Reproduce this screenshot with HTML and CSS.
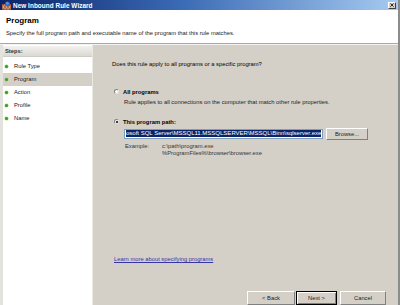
FILE: index.html
```html
<!DOCTYPE html>
<html>
<head>
<meta charset="utf-8">
<link rel="stylesheet" href="styles.css">
</head>
<body>
<div class="window">
  <div class="titlebar">
    <svg class="appicon" width="9" height="9" viewBox="0 0 9 9">
      <rect x="0" y="3" width="9" height="6" fill="#a0462a"/>
      <path d="M0 5h9M0 7h9M3 3v2M6 3v2M1.5 5v2M4.5 5v2M7.5 5v2M3 7v2M6 7v2" stroke="#e9c7a8" stroke-width="0.6"/>
      <circle cx="5.5" cy="2.8" r="2.3" fill="#3a7bd5" stroke="#1c3f8a" stroke-width="0.5"/>
      <path d="M4.2 2.2c.8-.6 1.8-.2 2.2.6" stroke="#7fd36a" stroke-width="0.8" fill="none"/>
    </svg>
    <span class="title">New Inbound Rule Wizard</span>
    <span class="closebtn">
      <svg width="5" height="5" viewBox="0 0 5 5"><path d="M0.5 0.5L4.5 4.5M4.5 0.5L0.5 4.5" stroke="#000" stroke-width="1"/></svg>
    </span>
  </div>
  <div class="header">
    <div class="htitle">Program</div>
    <div class="hsub">Specify the full program path and executable name of the program that this rule matches.</div>
  </div>
  <div class="main">
    <div class="sidebar">
      <div class="steps-head">Steps:</div>
      <ul class="steps">
        <li><span class="dot"></span>Rule Type</li>
        <li class="sel"><span class="dot"></span>Program</li>
        <li><span class="dot"></span>Action</li>
        <li><span class="dot"></span>Profile</li>
        <li><span class="dot"></span>Name</li>
      </ul>
    </div>
    <div class="content">
      <div class="question">Does this rule apply to all programs or a specific program?</div>
      <div class="opt opt1">
        <span class="radio"></span>
        <span class="olabel">All programs</span>
      </div>
      <div class="odesc">Rule applies to all connections on the computer that match other rule properties.</div>
      <div class="opt opt2">
        <span class="radio on"></span>
        <span class="olabel">This program path:</span>
      </div>
      <div class="pathrow">
        <div class="input"><span class="selected">osoft SQL Server\MSSQL11.MSSQLSERVER\MSSQL\Binn\sqlserver.exe</span></div>
        <div class="btn browse">Browse...</div>
      </div>
      <div class="example">
        <div class="exlabel">Example:</div>
        <div class="exvals">
          <div>c:\path\program.exe</div>
          <div>%ProgramFiles%\browser\browser.exe</div>
        </div>
      </div>
      <div class="spacer"></div>
      <a class="link" href="#">Learn more about specifying programs</a>
      <div class="buttons">
        <div class="btn wbtn">&lt; Back</div>
        <div class="btn wbtn default">Next &gt;</div>
        <div class="btn wbtn cancel">Cancel</div>
      </div>
    </div>
  </div>
</div>
</body>
</html>
```

FILE: styles.css
```css
html, body {
  margin: 0;
  padding: 0;
}
body {
  width: 400px;
  height: 305px;
  overflow: hidden;
  font-family: "Liberation Sans", Arial, sans-serif;
  font-size: 5.8px;
  color: #000;
  background: #d4d0c8;
}
.window {
  width: 400px;
  height: 320px;
  display: flex;
  flex-direction: column;
  box-sizing: border-box;
  border-right: 2px solid #8c8c8c;
}
.titlebar {
  height: 10px;
  flex: none;
  display: flex;
  align-items: center;
  background: linear-gradient(to right, #0a246a 0%, #3a6ab4 45%, #a6caf0 100%);
  padding-left: 2px;
  padding-right: 2px;
}
.appicon {
  flex: none;
  margin-right: 2px;
}
.title {
  color: #fff;
  font-weight: bold;
  font-size: 6.4px;
  font-family: "Liberation Sans", Arial, sans-serif;
  flex: 1;
  letter-spacing: 0.05px;
}
.closebtn {
  width: 8px;
  height: 7px;
  background: #d4d0c8;
  box-sizing: border-box;
  border-top: 1px solid #fff;
  border-left: 1px solid #fff;
  border-right: 1px solid #404040;
  border-bottom: 1px solid #404040;
  display: flex;
  align-items: center;
  justify-content: center;
}
.closebtn svg {
  width: 4px;
  height: 4px;
}
.header {
  height: 34px;
  flex: none;
  background: #fff;
  box-sizing: border-box;
  padding: 6px 0 0 6px;
  border-bottom: 1px solid #a8a8a8;
}
.htitle {
  font-weight: bold;
  font-size: 8px;
  line-height: 9px;
}
.hsub {
  margin-top: 5px;
  line-height: 7px;
  color: #222;
}
.main {
  flex: 1;
  display: flex;
  border-top: 1px solid #f4f4f4;
}
.sidebar {
  width: 89px;
  flex: none;
  background: #fff;
  border-left: 3px solid #e4e2dc;
  border-right: 1px solid #ebe9e4;
  padding-top: 1px;
}
.steps-head {
  height: 10px;
  line-height: 10px;
  padding-left: 2px;
  font-weight: bold;
  color: #333;
  background: linear-gradient(to bottom, #f2f1ee, #dcd9d2);
  border-bottom: 1px solid #cfccc4;
}
.steps {
  list-style: none;
  margin: 3px 0 0 0;
  padding: 0;
}
.steps li {
  height: 13px;
  line-height: 13px;
  display: flex;
  align-items: center;
  color: #222;
}
.steps li.sel {
  background: #d4d0c8;
}
.dot {
  width: 3px;
  height: 3px;
  border-radius: 50%;
  background: #3f9b2a;
  box-shadow: 0 0 0 0.5px #8ccf6e;
  margin-left: 2px;
  margin-right: 6px;
}
.content {
  flex: 1;
  background: #d4d0c8;
  display: flex;
  flex-direction: column;
  padding: 16px 12px 0 19px;
}
.question {
  line-height: 7px;
}
.opt {
  display: flex;
  align-items: center;
  height: 7px;
  margin-left: 2px;
}
.opt1 {
  margin-top: 20px;
}
.opt2 {
  margin-top: 12px;
}
.radio {
  width: 5px;
  height: 5px;
  border-radius: 50%;
  background: #fff;
  box-sizing: border-box;
  border: 1px solid #808080;
  border-right-color: #e0e0e0;
  border-bottom-color: #e0e0e0;
  position: relative;
  margin-right: 4px;
  flex: none;
}
.radio.on::after {
  content: "";
  position: absolute;
  left: 0.5px;
  top: 0.5px;
  width: 2px;
  height: 2px;
  border-radius: 50%;
  background: #000;
}
.olabel {
  font-weight: bold;
}
.odesc {
  margin-left: 12px;
  margin-top: 4px;
  line-height: 7px;
  color: #222;
}
.pathrow {
  display: flex;
  align-items: center;
  margin-top: 2px;
  margin-left: 12px;
  height: 13px;
}
.input {
  width: 199px;
  height: 10px;
  box-sizing: border-box;
  background: #fff;
  border: 1px solid #7f9db9;
  overflow: hidden;
  white-space: nowrap;
  display: flex;
  align-items: center;
  padding-left: 1px;
}
.selected {
  background: #0a246a;
  color: #fff;
  line-height: 7px;
  font-size: 6px;
}
.btn {
  background: #d4d0c8;
  box-sizing: border-box;
  border-top: 1px solid #fff;
  border-left: 1px solid #fff;
  border-right: 1px solid #808080;
  border-bottom: 1px solid #808080;
  display: flex;
  align-items: center;
  justify-content: center;
  color: #222;
}
.browse {
  width: 42px;
  height: 12px;
  margin-left: 3px;
}
.example {
  display: flex;
  margin-left: 13px;
  margin-top: 3px;
  color: #333;
  line-height: 6.5px;
}
.exlabel {
  width: 37px;
}
.spacer {
  flex: none;
  height: 100px;
}
.link {
  color: #3535a8;
  text-decoration: underline;
  line-height: 7px;
  align-self: flex-start;
  margin-left: 2px;
}
.buttons {
  display: flex;
  justify-content: flex-end;
  margin-top: 28px;
  margin-right: 0;
}
.wbtn {
  width: 48px;
  height: 14px;
}
.wbtn.default {
  width: 41px;
  margin-left: 1px;
  border: 1px solid #000;
  box-shadow: inset 1px 1px 0 #fff, inset -1px -1px 0 #808080;
}
.wbtn.cancel {
  width: 46px;
  margin-left: 3px;
}
```
